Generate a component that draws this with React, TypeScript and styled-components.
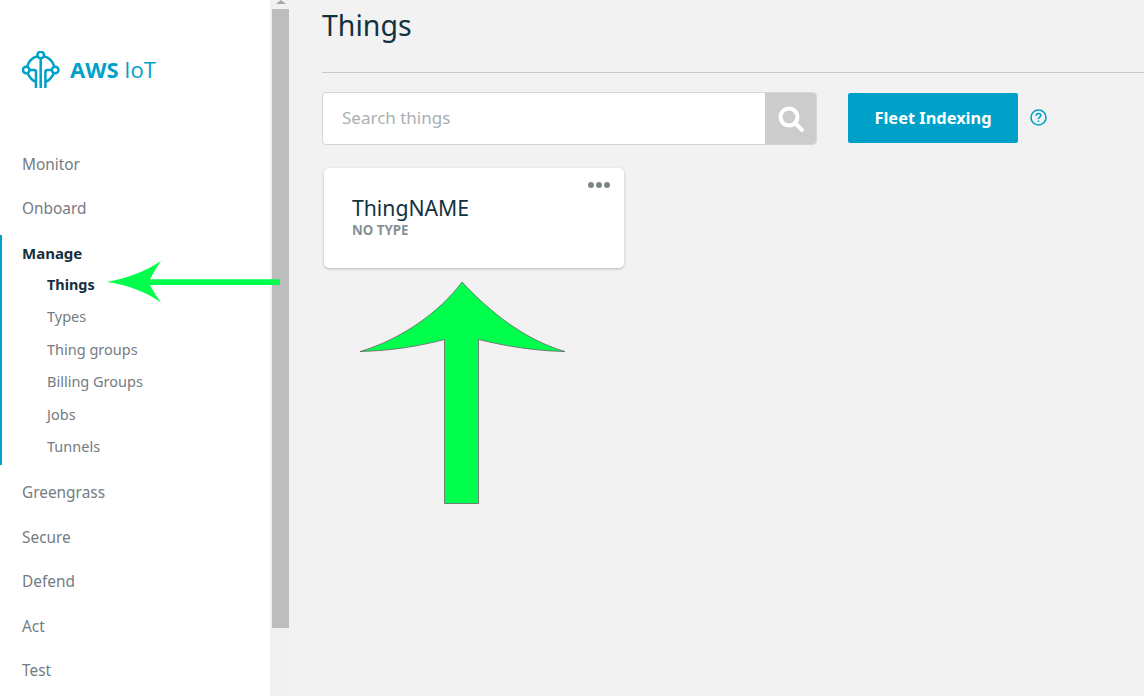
import React from 'react';
import styled, { createGlobalStyle } from 'styled-components';

const GlobalStyle = createGlobalStyle`
  html, body {
    margin: 0;
    padding: 0;
    height: 100%;
    overflow: hidden;
    background: #f2f2f2;
  }
  * {
    box-sizing: border-box;
  }
`
const Page = styled.div`
  position: relative;
  display: flex;
  width: 1144px;
  height: 696px;
  overflow: hidden;
  font-family: "Noto Sans", "Open Sans", sans-serif;
  background-color: #f2f2f2;
`
const Sidebar = styled.nav`
  flex: 0 0 270px;
  height: 696px;
  padding-top: 51px;
  background-color: #ffffff;
`
const Logo = styled.div`
  display: flex;
  align-items: center;
  gap: 10px;
  height: 38px;
  margin-bottom: 53px;
  padding-left: 22px;
`
const LogoText = styled.span`
  padding-bottom: 2px;
  font-family: "Open Sans", "Noto Sans", sans-serif;
  font-size: 22px;
  font-weight: 400;
  color: #00a1c9;
  b {
    font-weight: 700;
  }
`
const TopItem = styled.div<{ active?: boolean }>`
  display: flex;
  align-items: center;
  height: 44.5px;
  padding-left: 22px;
  font-size: 15.4px;
  font-weight: ${(props) => (props.active ? 700 : 400)};
  color: ${(props) => (props.active ? '#152f3d' : '#747c82')};
`
const Group = styled.div`
  height: 230px;
  margin: 4px 0 5.3px;
  padding-top: 3px;
  border-left: 2px solid #00a1c9;
  ${TopItem} {
    height: 29.7px;
    padding-left: 20px;
    font-size: 15px;
  }
`
const SubItem = styled.div<{ active?: boolean }>`
  display: flex;
  align-items: center;
  height: 32.5px;
  padding-left: 45px;
  padding-top: ${(props) => (props.active ? 1 : 0)}px;
  font-size: ${(props) => (props.active ? 14.4 : 14.5)}px;
  font-weight: ${(props) => (props.active ? 700 : 400)};
  color: ${(props) => (props.active ? '#152f3d' : '#747c82')};
`
const ScrollTrack = styled.div`
  position: relative;
  flex: 0 0 19px;
  height: 696px;
  padding: 9px 0 68px 2px;
  background-color: #f1f1f1;
`
const ScrollThumb = styled.div`
  width: 17px;
  height: 100%;
  background-color: #bdbdbd;
`
const ScrollUp = styled.div`
  position: absolute;
  top: 0;
  left: 6px;
  width: 0;
  height: 0;
  border-left: 5px solid transparent;
  border-right: 5px solid transparent;
  border-bottom: 4px solid #a8a8a8;
`
const Main = styled.main`
  flex: 1;
  min-width: 0;
  padding-left: 33px;
`
const Title = styled.h1`
  height: 73px;
  margin: 0;
  padding-top: 5px;
  font-size: 28.5px;
  line-height: 40px;
  font-weight: 400;
  color: #12323f;
  border-bottom: 1px solid #c8c8c8;
`
const Toolbar = styled.div`
  display: flex;
  align-items: flex-start;
  height: 53px;
  margin-top: 19px;
`
const Search = styled.div`
  display: flex;
  width: 495px;
  height: 53px;
  overflow: hidden;
  background-color: #ffffff;
  border: 1px solid #d5d5d5;
  border-radius: 4px;
`
const SearchInput = styled.input`
  flex: 1;
  min-width: 0;
  padding: 0 19px 2px;
  border: none;
  outline: none;
  font-family: inherit;
  font-size: 17px;
  background: transparent;
  color: #152f3d;
  &::placeholder {
    color: #aab0b3;
    opacity: 1;
  }
`
const SearchButton = styled.div`
  display: flex;
  align-items: center;
  justify-content: center;
  width: 52px;
  margin: -1px;
  background-color: #cccccc;
`
const FleetButton = styled.div`
  display: flex;
  align-items: center;
  justify-content: center;
  width: 170px;
  height: 50px;
  margin: 1px 0 0 31px;
  padding-bottom: 1px;
  font-size: 16.4px;
  font-weight: 700;
  color: #ffffff;
  background-color: #00a1c9;
  border-radius: 2px;
`
const HelpIcon = styled.svg`
  margin: 17px 0 0 12px;
`
const Card = styled.div`
  position: relative;
  width: 300px;
  height: 100px;
  margin: 23px 0 0 2px;
  padding: 26px 28px 0;
  background-color: #ffffff;
  border-radius: 5px;
  box-shadow: 0 1px 3px rgba(0, 0, 0, 0.25);
`
const CardName = styled.div`
  font-size: 21.2px;
  line-height: 28px;
  color: #12323f;
`
const CardType = styled.div`
  font-size: 13.3px;
  line-height: 16px;
  font-weight: 700;
  color: #879196;
`
const Dots = styled.div`
  position: absolute;
  top: 14px;
  right: 14px;
  display: flex;
  gap: 2px;
`
const Dot = styled.span`
  width: 6px;
  height: 6px;
  border-radius: 50%;
  background-color: #7d8488;
`
const Overlay = styled.svg`
  position: absolute;
  top: 0;
  left: 0;
  pointer-events: none;
`

const LogoIcon = () => (
  <svg width="38" height="38" viewBox="0 0 38 38" fill="none" stroke="#00a1c9" strokeWidth="2.5">
    <circle cx="18.700" cy="4" r="3.300" />
    <circle cx="4.200" cy="19" r="3.300" />
    <circle cx="33.200" cy="19" r="3.300" />
    <path d="M15.600 5.200C10.500 6.500 6.500 10.500 5 15.800" />
    <path d="M21.800 5.200C26.900 6.500 30.900 10.500 32.400 15.800" />
    <path d="M5.500 22C7.500 26.500 10 29.500 14 30.800" />
    <path d="M31.900 22C29.900 26.500 27.400 29.500 23.400 30.800" />
    <path d="M7.500 19H12C13.300 19 14 19.800 14 21V37" />
    <path d="M29.900 19H25.400C24.100 19 23.400 19.800 23.400 21V37" />
    <path d="M18.700 7.300V37" />
  </svg>
)

const SearchIcon = () => (
  <svg width="28" height="28" viewBox="0 0 28 28" fill="none" stroke="#ffffff">
    <circle cx="12" cy="12" r="8.500" strokeWidth="4" />
    <path d="M18.500 18.500L25 25" strokeWidth="4" strokeLinecap="round" />
  </svg>
)

const subItems = ['Things', 'Types', 'Thing groups', 'Billing Groups', 'Jobs', 'Tunnels'];

export default function App() {
  return (
    <Page>
      <GlobalStyle />
      <Sidebar>
        <Logo>
          <LogoIcon />
          <LogoText><b>AWS</b> IoT</LogoText>
        </Logo>
        <TopItem>Monitor</TopItem>
        <TopItem>Onboard</TopItem>
        <Group>
          <TopItem active>Manage</TopItem>
          {subItems.map((name) => (
            <SubItem key={name} active={name === 'Things'}>{name}</SubItem>
          ))}
        </Group>
        <TopItem>Greengrass</TopItem>
        <TopItem>Secure</TopItem>
        <TopItem>Defend</TopItem>
        <TopItem>Act</TopItem>
        <TopItem>Test</TopItem>
      </Sidebar>
      <ScrollTrack>
        <ScrollUp />
        <ScrollThumb />
      </ScrollTrack>
      <Main>
        <Title>Things</Title>
        <Toolbar>
          <Search>
            <SearchInput placeholder="Search things" readOnly />
            <SearchButton><SearchIcon /></SearchButton>
          </Search>
          <FleetButton>Fleet Indexing</FleetButton>
          <HelpIcon width="17" height="17" viewBox="0 0 17 17" fill="none" stroke="#00a1c9" strokeWidth="1.600">
            <circle cx="8.500" cy="8.500" r="7.500" />
            <path d="M6.200 6.700C6.200 5.300 7.300 4.500 8.500 4.500C9.800 4.500 10.800 5.400 10.800 6.500C10.800 8 8.500 8.200 8.500 10" />
            <path d="M8.500 11.500V13" />
          </HelpIcon>
        </Toolbar>
        <Card>
          <Dots>
            <Dot />
            <Dot />
            <Dot />
          </Dots>
          <CardName>ThingNAME</CardName>
          <CardType>NO TYPE</CardType>
        </Card>
      </Main>
      <Overlay width="1144" height="696" viewBox="0 0 1144 696">
        <path
          d="M280 279.300H150C153 273 157 267 161 261C146 271 128 278 107 282C128 285 146 292 161 302.700C157 297 153 291 150 285H280Z"
          fill="#00ff4c"
        />
        <path
          d="M462 282C440 312 400 340 360 351.500C390 351 420 346 444.500 339.500V503.500H478.500V339.500C505 346 535 351 565 351.500C525 340 490 312 462 282Z"
          fill="#00ff4c"
          stroke="#6b5f6b"
          strokeWidth="0.800"
        />
      </Overlay>
    </Page>
  );
}
